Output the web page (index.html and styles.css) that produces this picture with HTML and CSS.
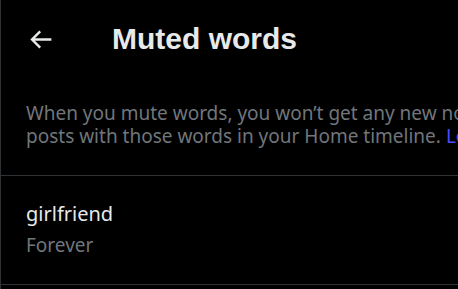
FILE: index.html
```html
<!DOCTYPE html>
<html lang="en">
<head>
  <meta charset="UTF-8">
  <title>Muted words</title>
  <link rel="stylesheet" href="styles.css">
</head>
<body>
  <div class="page">
    <div class="header">
      <a href="#" class="back" aria-label="Back">
        <svg viewBox="0 0 24 24" width="29" height="29">
          <path d="M7.414 13l5.043 5.04-1.414 1.42L3.586 12l7.457-7.46 1.414 1.42L7.414 11H21v2H7.414z" fill="#e7e9ea"/>
        </svg>
      </a>
      <h1>Muted words</h1>
    </div>

    <p class="intro">
      When you mute words, you won’t get any new notifications for posts that include them or see<br>
      posts with those words in your Home timeline. <a href="#">Learn more</a>
    </p>

    <div class="word">
      <div class="word-name">girlfriend</div>
      <div class="word-time">Forever</div>
    </div>
  </div>
</body>
</html>
```

FILE: styles.css
```css
* {
  margin: 0;
  padding: 0;
  box-sizing: border-box;
  font-family: 'Noto Sans', sans-serif;
}

body {
  background: #000;
  overflow: hidden;
}

.page {
  width: 458px;
  height: 289px;
  overflow: hidden;
  border-left: 1px solid #2f3336;
}

.header {
  height: 78px;
  display: flex;
  align-items: center;
  padding-left: 25px;
}

.back {
  display: flex;
  width: 29px;
  height: 29px;
  margin-right: 57px;
}

.header h1 {
  font-family: 'Liberation Sans', sans-serif;
  font-size: 30px;
  font-weight: 700;
  color: #e7e9ea;
}

.intro {
  width: 900px;
  padding: 24px 0 27px 25px;
  font-size: 19px;
  line-height: 23px;
  color: #71767b;
  border-bottom: 1px solid #2f3336;
}

.intro a {
  color: #4d4dff;
  text-decoration: none;
}

.word {
  padding: 25px 25px 27px;
  border-bottom: 1px solid #2f3336;
}

.word-name {
  font-size: 20px;
  line-height: 26px;
  color: #e7e9ea;
}

.word-time {
  margin-top: 7px;
  font-size: 19px;
  line-height: 23px;
  color: #71767b;
}
```
